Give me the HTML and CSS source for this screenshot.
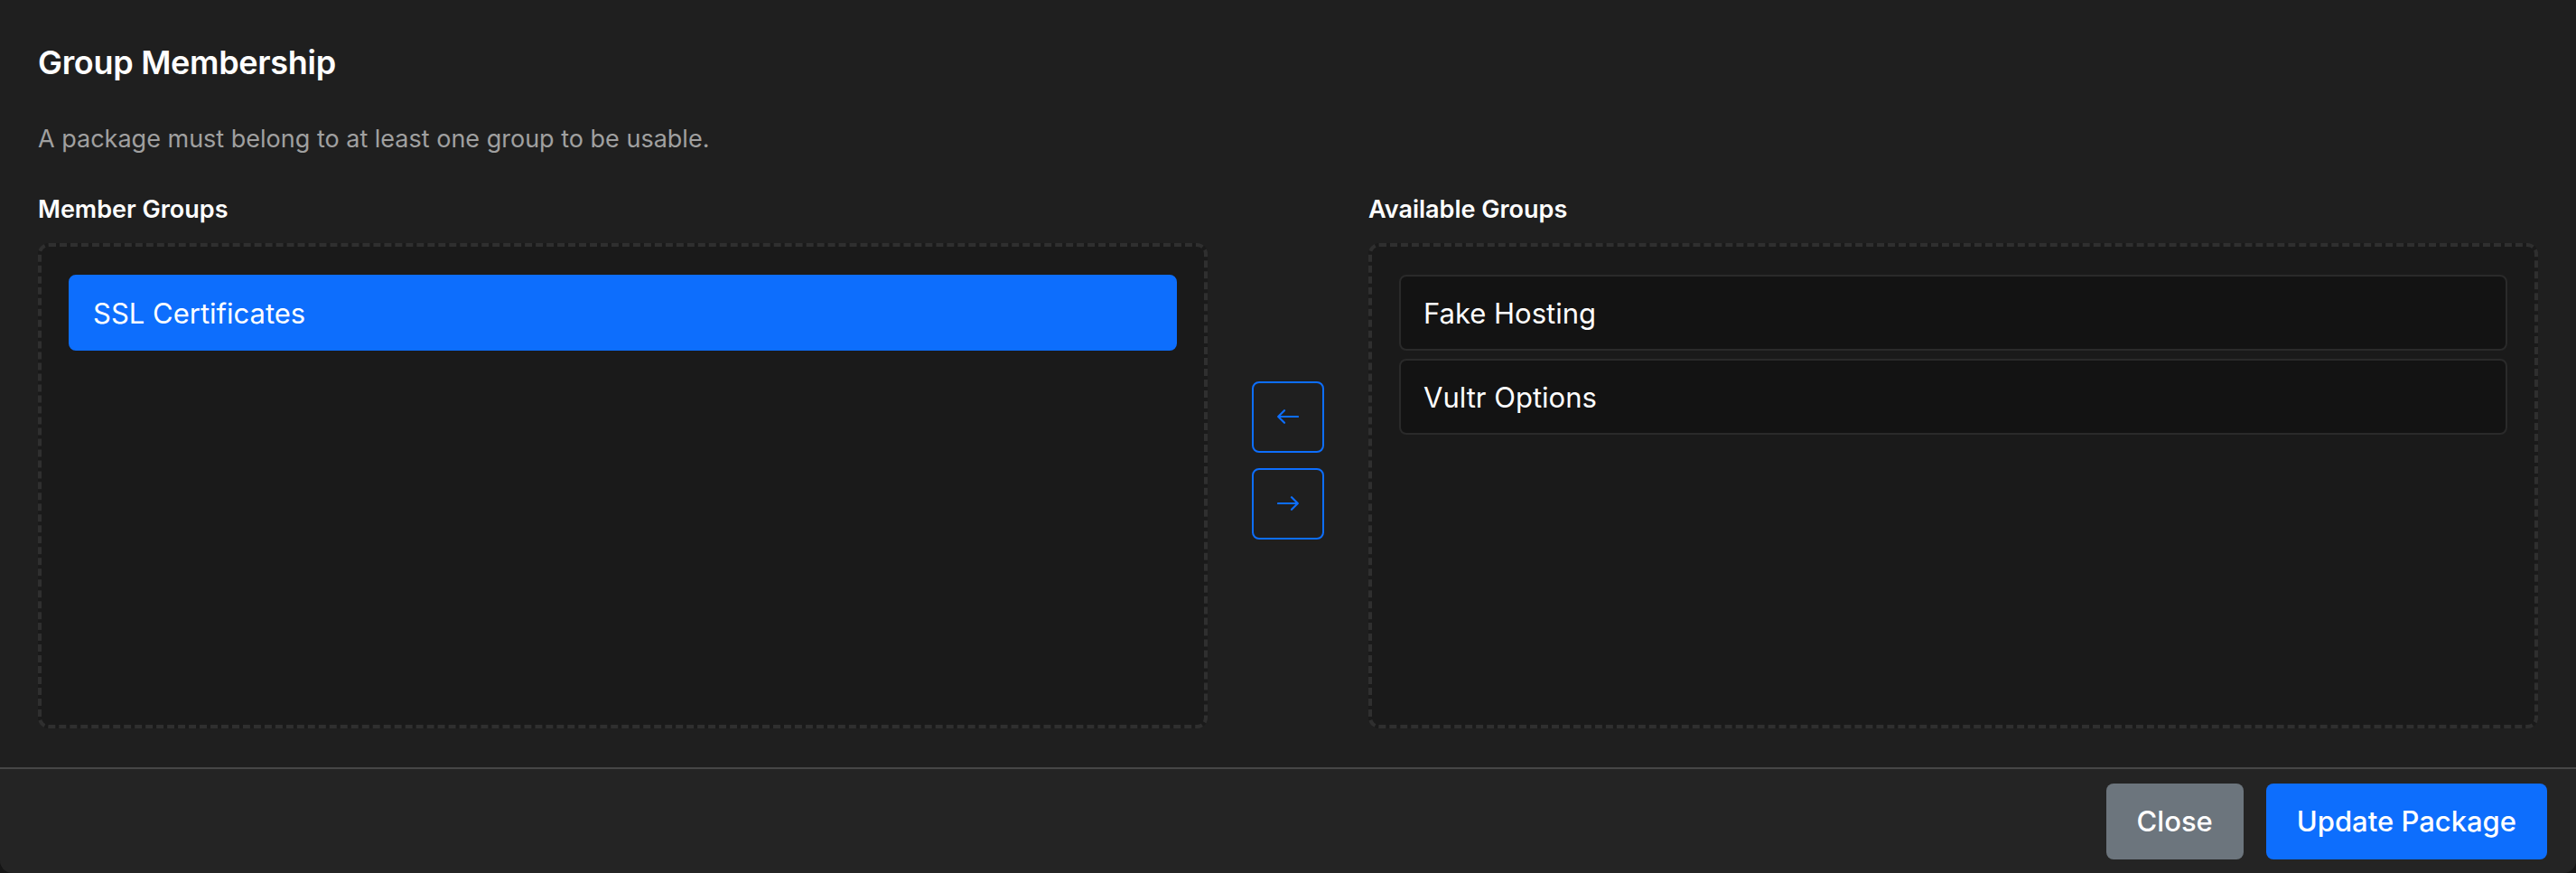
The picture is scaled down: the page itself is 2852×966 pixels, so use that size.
FILE: index.html
```html
<!DOCTYPE html>
<html lang="en">
<head>
<meta charset="utf-8">
<title>Group Membership</title>
<link rel="stylesheet" href="styles.css">
</head>
<body>
<div class="modal">
  <div class="modal-body">
    <h5 class="title">Group Membership</h5>
    <p class="subtitle">A package must belong to at least one group to be usable.</p>
    <div class="groups">
      <div class="col">
        <div class="label">Member Groups</div>
        <div class="box">
          <div class="item active">SSL Certificates</div>
        </div>
      </div>
      <div class="mover">
        <button class="arrow-btn" type="button" aria-label="Add">
          <svg viewBox="0 0 24 16" width="24" height="16"><path d="M23 8H1.5M8 1.2L1.2 8L8 14.8" fill="none" stroke="currentColor" stroke-width="2.2" stroke-linecap="round" stroke-linejoin="round"/></svg>
        </button>
        <button class="arrow-btn" type="button" aria-label="Remove">
          <svg viewBox="0 0 24 16" width="24" height="16"><path d="M1 8H22.5M16 1.2L22.8 8L16 14.8" fill="none" stroke="currentColor" stroke-width="2.2" stroke-linecap="round" stroke-linejoin="round"/></svg>
        </button>
      </div>
      <div class="col">
        <div class="label">Available Groups</div>
        <div class="box">
          <div class="item">Fake Hosting</div>
          <div class="item">Vultr Options</div>
        </div>
      </div>
    </div>
  </div>
  <div class="modal-footer">
    <button class="btn btn-secondary" type="button">Close</button>
    <button class="btn btn-primary" type="button">Update Package</button>
  </div>
</div>
</body>
</html>
```
FILE: styles.css
```css
* { box-sizing: border-box; }
html, body {
  margin: 0;
  padding: 0;
  background: #161616;
}
body {
  width: 2852px;
  height: 966px;
  overflow: hidden;
  font-family: Inter, "Liberation Sans", sans-serif;
  color: #ffffff;
}
.modal {
  width: 2852px;
  height: 966px;
  display: flex;
  flex-direction: column;
  background: #1f1f1f;
  border-radius: 0 0 14px 14px;
  overflow: hidden;
}
.modal-body {
  padding: 45px 42px 43px 42px;
}
.title {
  margin: 0;
  font-size: 36px;
  line-height: 48px;
  font-weight: 600;
  letter-spacing: -0.3px;
}
.subtitle {
  margin: 41px 0 0 0;
  font-size: 27px;
  line-height: 40px;
  color: #a0a0a0;
}
.groups {
  margin-top: 38px;
  display: grid;
  grid-template-columns: 1fr 178px 1fr;
}
.col {
  display: flex;
  flex-direction: column;
}
.label {
  font-size: 27px;
  line-height: 40px;
  font-weight: 600;
  margin-bottom: 17px;
}
.box {
  height: 537px;
  border: 4px dashed #2f2f2f;
  border-radius: 12px;
  background: #1a1a1a;
  padding: 31px 30px;
  display: flex;
  flex-direction: column;
  gap: 9px;
}
.item {
  height: 84px;
  display: flex;
  align-items: center;
  padding: 0 25px;
  border: 2px solid #2a2a2a;
  border-radius: 8px;
  background: #131313;
  font-size: 31px;
}
.item.active {
  background: #0d6efd;
  border-color: #0d6efd;
}
.mover {
  display: flex;
  flex-direction: column;
  align-items: center;
  justify-content: center;
  gap: 17px;
}
.arrow-btn {
  width: 80px;
  height: 79px;
  padding: 0;
  border: 2px solid #0d6efd;
  border-radius: 8px;
  background: transparent;
  color: #0d6efd;
  display: flex;
  align-items: center;
  justify-content: center;
}
.arrow-btn svg { display: block; }
.modal-footer {
  flex: 1;
  border-top: 2px solid #464646;
  background: #242424;
  display: flex;
  align-items: center;
  justify-content: flex-end;
  gap: 25px;
  padding: 0 32px;
}
.btn {
  height: 84px;
  padding: 0 34px;
  border: 0;
  border-radius: 8px;
  color: #ffffff;
  font-family: Inter, "Liberation Sans", sans-serif;
  font-size: 31px;
  font-weight: 500;
}
.btn-secondary { background: #6c757d; }
.btn-primary { background: #0d6efd; }
```
